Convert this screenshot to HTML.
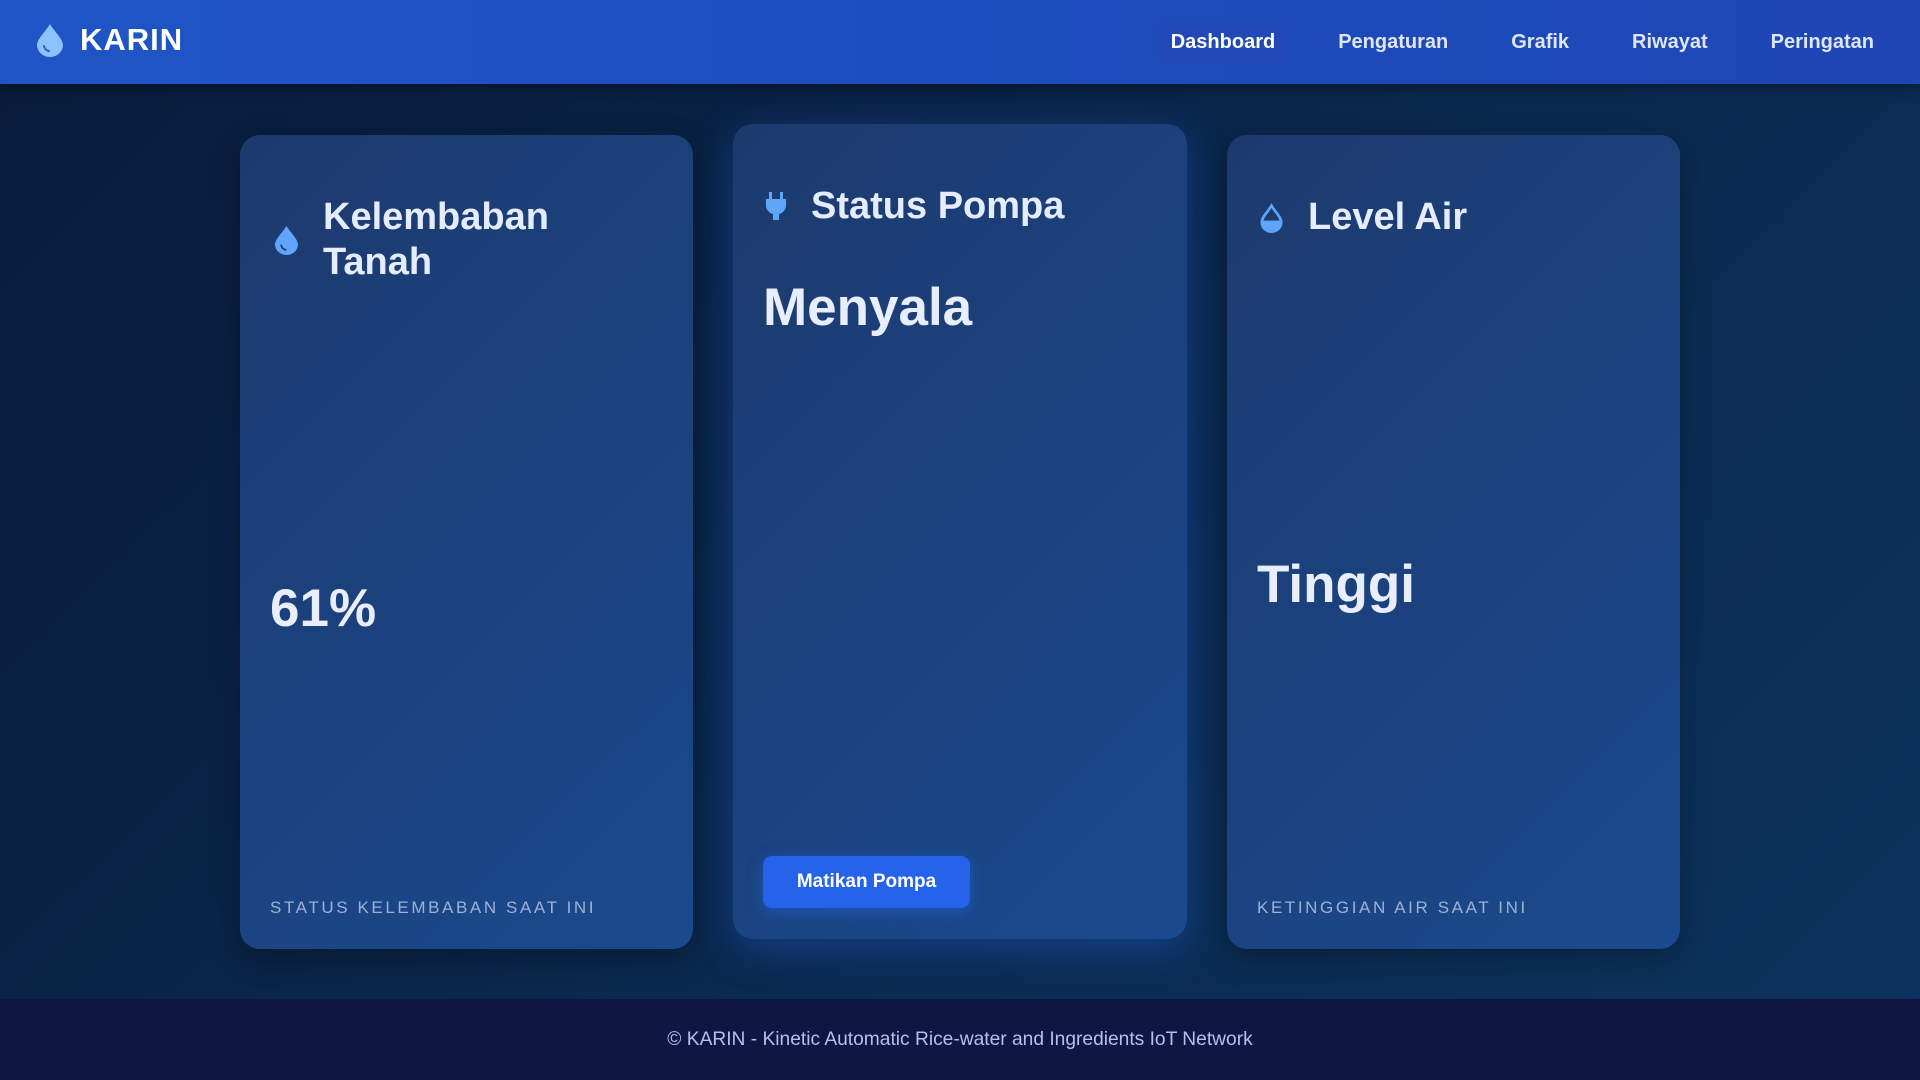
<!DOCTYPE html>
<html><head><meta charset="utf-8"><style>
*{margin:0;padding:0;box-sizing:border-box}
body{width:1920px;height:1080px;overflow:hidden;font-family:"Liberation Sans",sans-serif;background:linear-gradient(135deg,#081b39 0%,#0b2a50 60%,#0c3460 100%);position:relative}
.nav{position:absolute;left:0;top:0;width:1920px;height:84px;background:linear-gradient(90deg,#1f55c6,#1e46b4);box-shadow:0 4px 12px rgba(0,0,0,.35)}
.logo{position:absolute;left:36px;top:22px;display:flex;align-items:center;color:#fff;font-weight:bold;font-size:31px;letter-spacing:1px}
.logo svg{margin-right:16px}
.menu{position:absolute;right:31px;top:0;height:84px;display:flex;align-items:center}
.menu a{color:#dfe6ff;font-weight:bold;font-size:20px;text-decoration:none;margin-left:33px;padding:10px 15px;border-radius:10px}
.menu a.act{background:#2149b8;color:#fff}
.card{position:absolute;border-radius:20px;background:linear-gradient(135deg,#1c3a6e,#1a4a8e);box-shadow:0 10px 30px rgba(0,0,0,.3)}
.t{position:absolute;left:32px;color:#e6ecff;font-weight:bold;font-size:38px;line-height:45px;display:flex;align-items:center}
.t svg{margin-right:24px;flex:none}
.v{position:absolute;left:30px;color:#e9eeff;font-weight:bold;font-size:53px}
.l{position:absolute;left:30px;color:#9fb1d6;font-size:17px;letter-spacing:2.6px}
.btn{position:absolute;left:30px;top:732px;width:207px;height:52px;background:#2563eb;color:#fff;font-weight:bold;font-size:19px;border-radius:9px;display:flex;align-items:center;justify-content:center;box-shadow:0 4px 14px rgba(37,99,235,.5)}
.foot{position:absolute;left:0;top:999px;width:1920px;height:81px;background:#0e1642;color:#b3c0ee;font-size:19.2px;display:flex;align-items:center;justify-content:center}
</style></head><body>
<div class="nav">
<div class="logo"><svg width="28" height="34" viewBox="0 0 28 34"><path d="M14 1C10 8 1 16 1 22a13 12 0 0 0 26 0C27 16 18 8 14 1z" fill="#8ec1ff"/><path d="M8 23a6 6 0 0 0 5 5" stroke="#2a5bc9" stroke-width="2" fill="none" stroke-linecap="round"/></svg>KARIN</div>
<div class="menu"><a class="act">Dashboard</a><a>Pengaturan</a><a>Grafik</a><a>Riwayat</a><a>Peringatan</a></div>
</div>
<div class="card" style="left:240px;top:135px;width:453px;height:814px">
<div class="t" style="top:60px;left:34px"><svg width="25" height="30" viewBox="0 0 28 34"><path d="M14 1C10 8 1 16 1 22a13 12 0 0 0 26 0C27 16 18 8 14 1z" fill="#60a5fa"/><path d="M8 23a6 6 0 0 0 5 5" stroke="#1c3a6e" stroke-width="2" fill="none" stroke-linecap="round"/></svg><span>Kelembaban<br>Tanah</span></div>
<div class="v" style="top:443px">61%</div>
<div class="l" style="top:763px">STATUS KELEMBABAN SAAT INI</div>
</div>
<div class="card" style="left:733px;top:124px;width:454px;height:815px;box-shadow:0 10px 40px rgba(37,99,235,.35)">
<div class="t" style="top:60px"><svg width="22" height="30" viewBox="0 0 22 30"><rect x="4" y="0" width="3" height="8" fill="#60a5fa"/><rect x="15" y="0" width="3" height="8" fill="#60a5fa"/><path d="M1 7h20v7a9 9 0 0 1-7 8v6h-6v-6a9 9 0 0 1-7-8z" fill="#60a5fa"/></svg>Status Pompa</div>
<div class="v" style="top:153px">Menyala</div>
<div class="btn">Matikan Pompa</div>
</div>
<div class="card" style="left:1227px;top:135px;width:453px;height:814px">
<div class="t" style="top:60px"><svg width="25" height="30" viewBox="0 0 28 34"><path d="M14 3C10 10 3 16 3 22a11 10.5 0 0 0 22 0C25 16 18 10 14 3z" fill="none" stroke="#60a5fa" stroke-width="3"/><path d="M2 20h24a12 11 0 0 1-24 0z" fill="#60a5fa"/></svg>Level Air</div>
<div class="v" style="top:419px">Tinggi</div>
<div class="l" style="top:763px">KETINGGIAN AIR SAAT INI</div>
</div>
<div class="foot">© KARIN - Kinetic Automatic Rice-water and Ingredients IoT Network</div>
</body></html>
